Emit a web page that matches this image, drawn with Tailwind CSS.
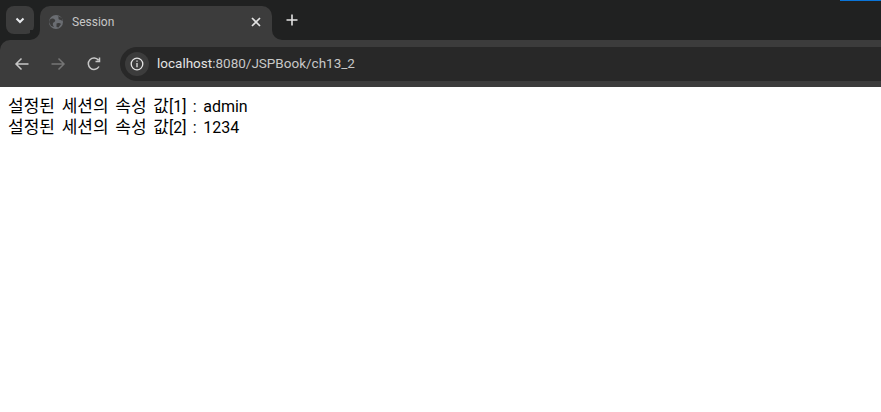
<!DOCTYPE html>
<html lang="ko">
<head>
  <meta charset="UTF-8">
  <title>Session</title>
  <script src="https://cdn.jsdelivr.net/npm/@tailwindcss/browser@4"></script>
</head>
<body class="bg-white h-[412px] overflow-hidden font-['Roboto','Noto_Sans_CJK_KR',sans-serif]">
  <div class="bg-[#202121]">
  <!-- Tab strip -->
  <div class="relative h-10 flex items-start">
    <div class="absolute top-0 right-0 w-[41px] h-[1px] bg-[#0a74d8]"></div>
    <button class="mt-[6px] ml-[6px] w-[28px] h-[28px] rounded-lg bg-[#3c3c3c] flex items-center justify-center">
      <svg width="12" height="12" viewBox="0 0 12 12" fill="none" stroke="#e8eaed" stroke-width="2"><path d="M2.500 4.500 6 8l3.500-3.500"/></svg>
    </button>
    <!-- Active tab -->
    <div class="relative mt-[6px] ml-[6px] w-[232px] h-[34px] rounded-t-[10px] bg-[#3c3c3c] flex items-center pl-[9px] pr-[11px]">
      <svg width="14" height="14" viewBox="0 0 14 14" class="mb-[3px]"><circle cx="7" cy="7" r="7" fill="#6a6d72"/><path d="M1 4.500C3 3 5 3.500 6 5c.8 1.300-.5 2-1.500 2.500S3.500 10 5 12L2 11 0 7zM9 1c1 1.500 0 3 1 3.500s2.500.5 3.500 1.500L13 3zM7.500 8.500c1.500-1 3.500-.5 4.500.5l-2.500 3.500-2-.5z" fill="#3c3c3c"/></svg>
      <span class="ml-[9px] mb-[3px] text-xs text-[#c7c7c7]">Session</span>
      <svg width="10" height="10" viewBox="0 0 10 10" fill="none" stroke="#e3e3e3" stroke-width="1.700" class="ml-auto mb-[3px]"><path d="m1 1 8 8M9 1 1 9"/></svg>
      <div class="absolute bottom-0 -left-[10px] w-[10px] h-[10px] bg-[#3c3c3c]"><div class="w-full h-full bg-[#202121] rounded-br-[10px]"></div></div>
      <div class="absolute bottom-0 -right-[10px] w-[10px] h-[10px] bg-[#3c3c3c]"><div class="w-full h-full bg-[#202121] rounded-bl-[10px]"></div></div>
    </div>
    <svg width="12" height="12" viewBox="0 0 12 12" fill="none" stroke="#e3e3e3" stroke-width="1.600" class="ml-[14px] mt-[14px]"><path d="M6 .5v11M.5 6h11"/></svg>
  </div>
  <!-- Toolbar -->
  <div class="h-[47px] bg-[#3c3c3c] rounded-tl-[10px] flex items-center pl-[14px]">
    <svg width="16" height="16" viewBox="0 0 16 16" fill="none" stroke="#c7c7c7" stroke-width="1.500"><path d="M14.500 8H2M7.500 2.500 2 8l5.500 5.500"/></svg>
    <svg width="16" height="16" viewBox="0 0 16 16" fill="none" stroke="#757575" stroke-width="1.500" class="ml-[20px]"><path d="M1.500 8H14M8.500 2.500 14 8l-5.500 5.500"/></svg>
    <svg width="16" height="16" viewBox="0 0 16 16" fill="none" stroke="#c7c7c7" stroke-width="1.500" class="ml-[20px]"><path d="M13 10.500A5.700 5.700 0 1 1 12.500 4.200M13.500 1.500v4h-4"/></svg>
    <div class="ml-[18px] h-[34px] flex-1 rounded-l-[17px] bg-[#282828] flex items-center pl-[5px]">
      <div class="w-6 h-6 rounded-full bg-[#3c3c3c] flex items-center justify-center">
        <svg width="14" height="14" viewBox="0 0 14 14" fill="none" stroke="#e3e3e3" stroke-width="1.300"><circle cx="7" cy="7" r="5.800"/><path d="M7 6v4.200M7 3.500v1.300"/></svg>
      </div>
      <span class="ml-[8px] text-[13.5px] text-[#c7c7c7]"><span class="text-[#e3e3e3]">localhost</span>:8080/JSPBook/ch13_2</span>
    </div>
  </div>
  </div>
  <!-- Page -->
  <div class="pt-[9px] pl-2 text-[17px] leading-[21px] text-black [word-spacing:2.500px]">
    <p>설정된 세션의 속성 값<span class="text-[16px]">[1] : admin</span></p>
    <p>설정된 세션의 속성 값<span class="text-[16px]">[2] : 1234</span></p>
  </div>
</body>
</html>
